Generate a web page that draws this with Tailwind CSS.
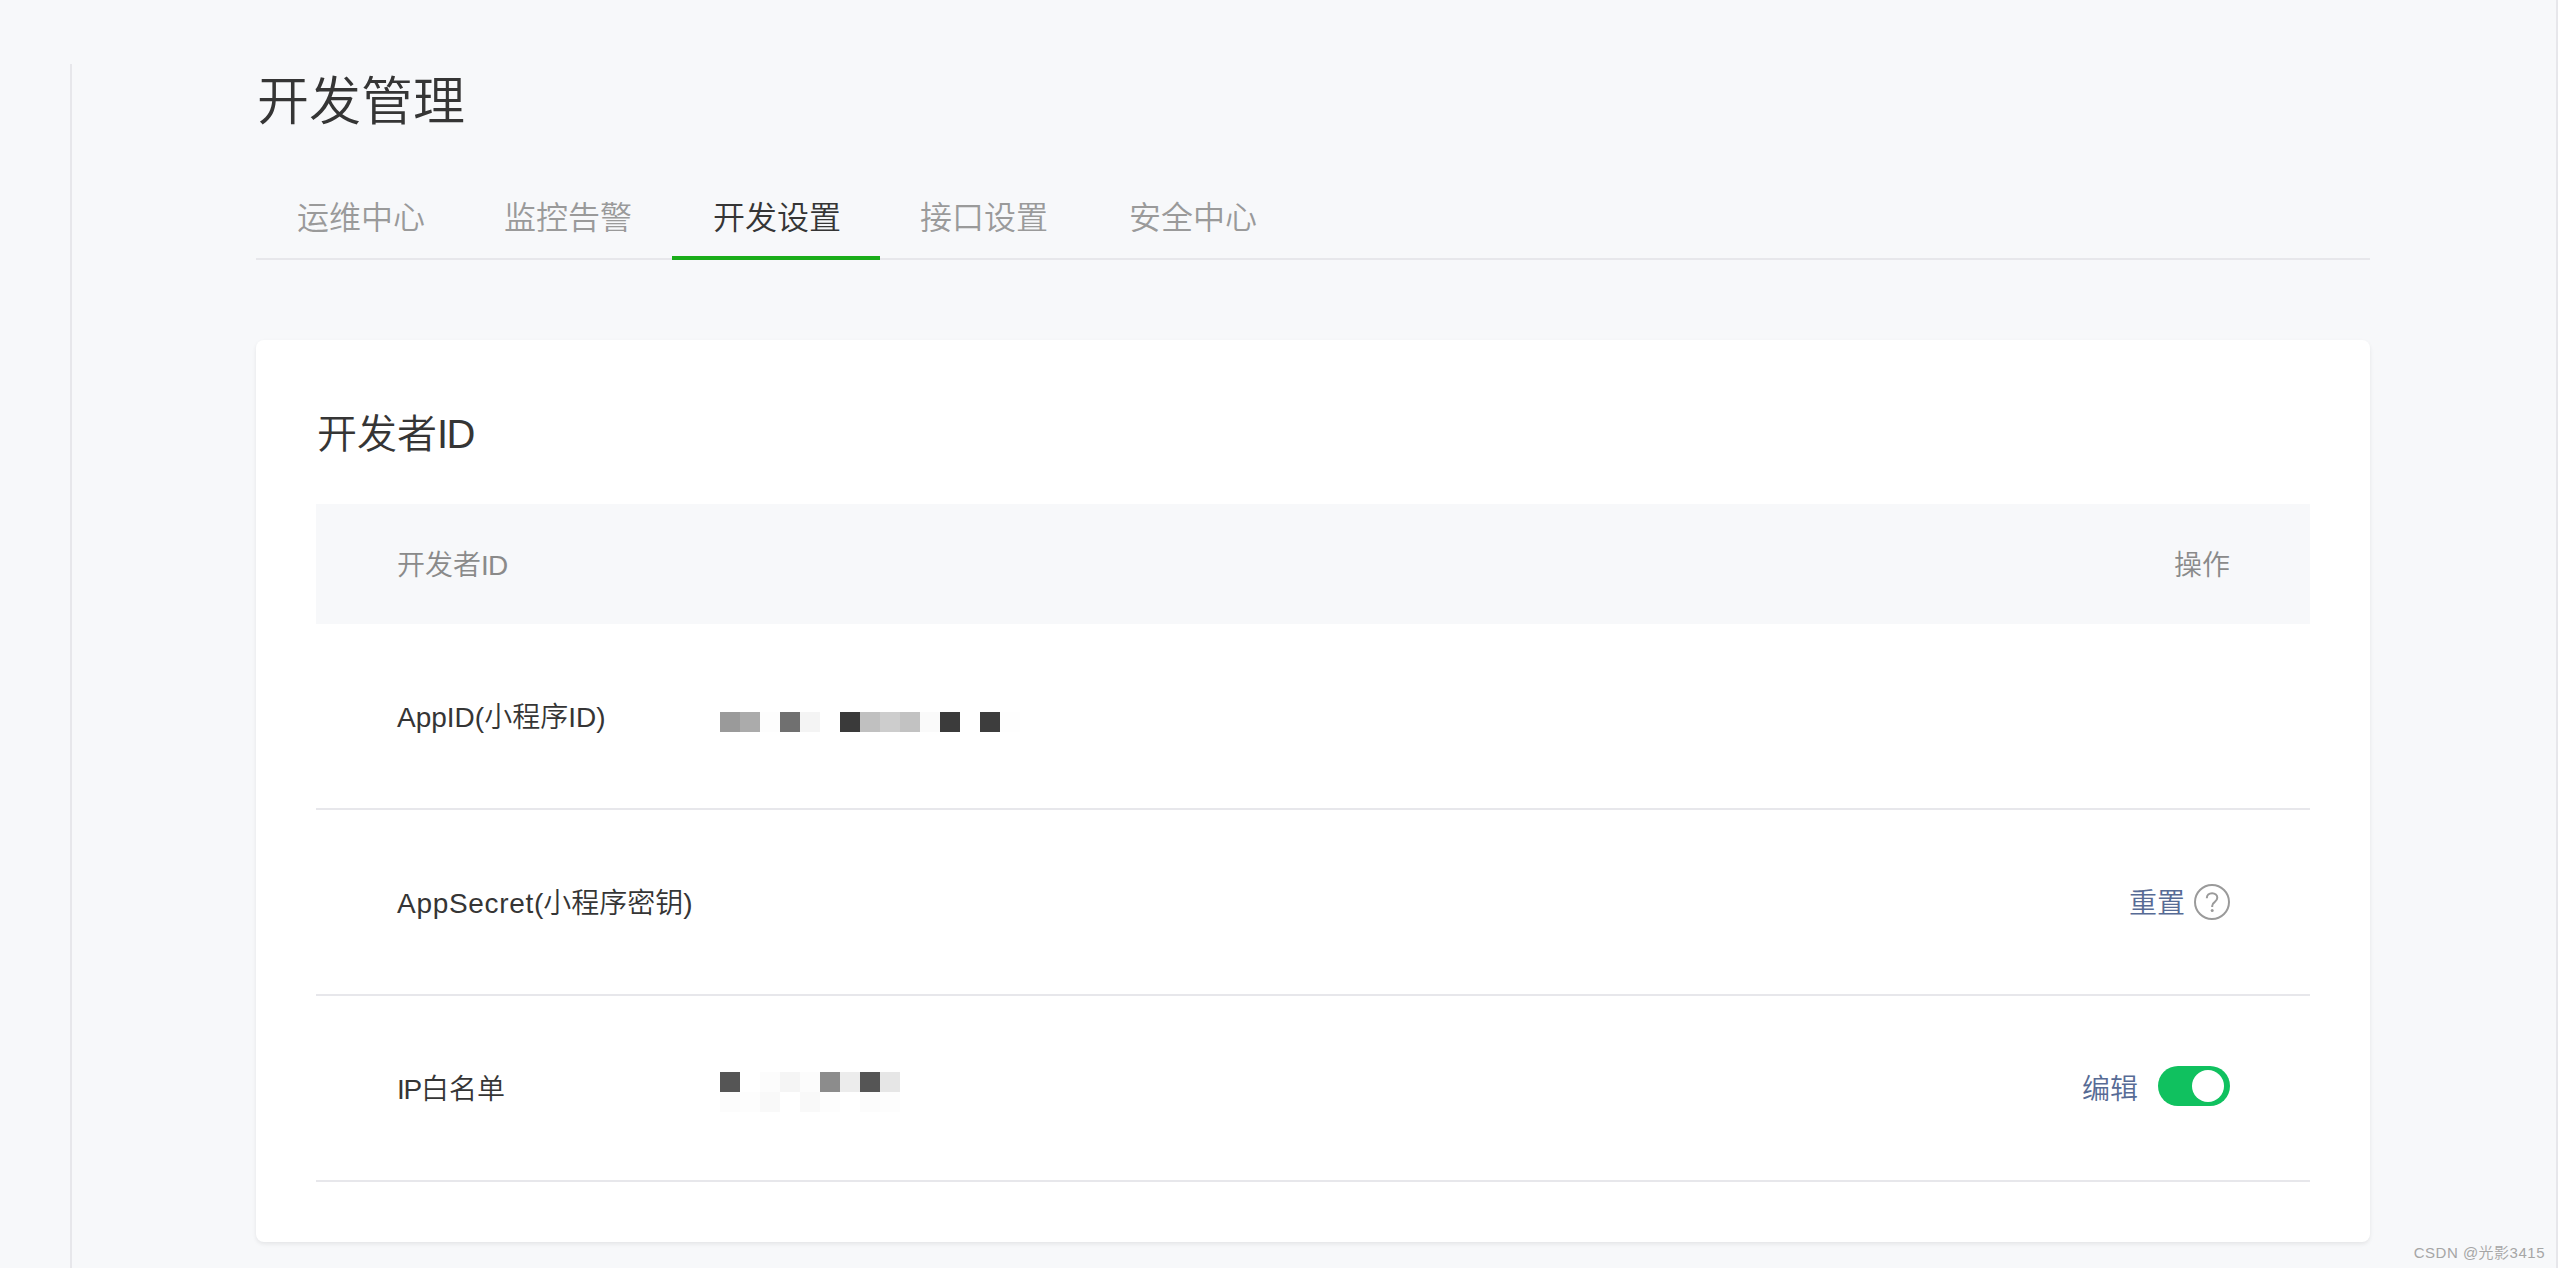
<!DOCTYPE html>
<html lang="zh-CN">
<head>
<meta charset="utf-8">
<title>开发管理</title>
<script src="https://cdn.jsdelivr.net/npm/@tailwindcss/browser@4"></script>
</head>
<body class="h-[1268px] overflow-hidden bg-white font-['Liberation_Sans','Noto_Sans_CJK_SC',sans-serif] font-[350] text-[#353535]">
<div class="border-r-2 border-white">
<div class="relative h-[1268px] border-r-2 border-[#e7e7eb] bg-[#f7f8fa]">
  <div class="pt-[64px] pl-[70px] h-full">
    <div class="h-full w-[2300px] border-l-2 border-[#e7e7eb] pl-[184px]">
      <h1 class="ml-[1px] h-[72px] text-[52px] leading-[76px] font-[350]">开发管理</h1>
      <nav class="mt-[38px] flex h-[86px] w-[2114px] border-b-2 border-[#e7e7eb] text-[32px] leading-[88px] text-[#9a9a9a]">
        <a class="w-[208px] pl-[2px] text-center">运维中心</a>
        <a class="w-[208px] text-center">监控告警</a>
        <a class="-mb-[2px] h-[86px] w-[208px] border-b-4 border-[#1aad19] pl-[2px] text-center text-[#353535]">开发设置</a>
        <a class="w-[208px] text-center">接口设置</a>
        <a class="w-[208px] pl-[2px] text-center">安全中心</a>
      </nav>
      <section class="mt-[80px] w-[2114px] rounded-lg bg-white p-[60px] shadow-[0_2px_4px_rgba(0,0,0,0.08)]">
        <h2 class="mb-[40px] ml-[1px] h-[64px] text-[40px] leading-[68px] font-[350]">开发者<span class="tracking-[-1.5px]">ID</span></h2>
        <div class="flex h-[120px] items-center justify-between bg-[#f7f8fa] pt-[4px] pr-[80px] pl-[81px] text-[28px] text-[#8a8a8a]">
          <span>开发者<span class="tracking-[-0.8px]">ID</span></span>
          <span>操作</span>
        </div>
        <div class="flex h-[186px] items-center border-b-2 border-[#e7e7eb] pr-[80px] pl-[81px] text-[28px]">
          <span class="w-[323px] pt-[4px]">AppID(小程序ID)</span>
          <div class="mt-[12px] flex">
            <i class="h-5 w-5 bg-[#9a9a9a]"></i><i class="h-5 w-5 bg-[#ababab]"></i><i class="h-5 w-5 bg-[#fdfdfd]"></i><i class="h-5 w-5 bg-[#707070]"></i><i class="h-5 w-5 bg-[#f4f4f4]"></i><i class="h-5 w-5 bg-white"></i><i class="h-5 w-5 bg-[#3a3a3a]"></i><i class="h-5 w-5 bg-[#c0c0c0]"></i><i class="h-5 w-5 bg-[#cdcdcd]"></i><i class="h-5 w-5 bg-[#c2c2c2]"></i><i class="h-5 w-5 bg-[#fafafa]"></i><i class="h-5 w-5 bg-[#3b3b3b]"></i><i class="h-5 w-5 bg-white"></i><i class="h-5 w-5 bg-[#3d3d3d]"></i><i class="h-5 w-5 bg-[#fefefe]"></i>
          </div>
        </div>
        <div class="flex h-[186px] items-center justify-between border-b-2 border-[#e7e7eb] pr-[80px] pl-[81px] text-[28px]">
          <span class="pt-[4px]"><span class="tracking-[0.7px]">AppSecret</span>(小程序密钥)</span>
          <div class="flex items-center gap-[9px]">
            <a class="pt-[3px] text-[#576b95]">重置</a>
            <svg class="h-9 w-9" viewBox="0 0 36 36" fill="none">
              <circle cx="18" cy="18" r="17" stroke="#9a9a9a" stroke-width="2"/>
              <path d="M12.8 14.2c0-3 2.2-5 5.3-5 3 0 5.2 1.9 5.2 4.6 0 2-1 3.1-2.7 4.3-1.7 1.1-2.4 2-2.4 4v.8" stroke="#9a9a9a" stroke-width="2"/>
              <circle cx="18.2" cy="26.6" r="1.5" fill="#9a9a9a"/>
            </svg>
          </div>
        </div>
        <div class="flex h-[186px] items-center justify-between border-b-2 border-[#e7e7eb] pr-[80px] pl-[81px] text-[28px]">
          <div class="flex items-center">
            <span class="w-[323px] pt-[4px]"><span class="tracking-[-1.2px]">IP</span>白名单</span>
            <div class="mt-[8px] grid grid-cols-9">
              <i class="h-5 w-5 bg-[#555555]"></i><i class="h-5 w-5 bg-white"></i><i class="h-5 w-5 bg-[#fcfcfc]"></i><i class="h-5 w-5 bg-[#f5f5f5]"></i><i class="h-5 w-5 bg-[#fcfcfc]"></i><i class="h-5 w-5 bg-[#8c8c8c]"></i><i class="h-5 w-5 bg-[#ececec]"></i><i class="h-5 w-5 bg-[#555555]"></i><i class="h-5 w-5 bg-[#e6e6e6]"></i>
              <i class="h-5 w-5 bg-[#fcfcfc]"></i><i class="h-5 w-5 bg-[#fdfdfd]"></i><i class="h-5 w-5 bg-[#f9f9f9]"></i><i class="h-5 w-5 bg-white"></i><i class="h-5 w-5 bg-[#f9f9f9]"></i><i class="h-5 w-5 bg-[#fdfdfd]"></i><i class="h-5 w-5 bg-white"></i><i class="h-5 w-5 bg-[#fcfcfc]"></i><i class="h-5 w-5 bg-[#fdfdfd]"></i>
            </div>
          </div>
          <div class="flex items-center gap-[20px]">
            <a class="pt-[4px] text-[#576b95]">编辑</a>
            <div class="-mt-[4px] flex h-[40px] w-[72px] items-center justify-end rounded-full bg-[#10c15f] pr-[6px]">
              <span class="h-8 w-8 rounded-full bg-white"></span>
            </div>
          </div>
        </div>
      </section>
    </div>
  </div>
  <div class="absolute right-[11px] top-[1243px] text-[15px] leading-[20px] tracking-[0.5px] text-[#a6a6a6]">CSDN @光影3415</div>
</div>
</div>
</body>
</html>
